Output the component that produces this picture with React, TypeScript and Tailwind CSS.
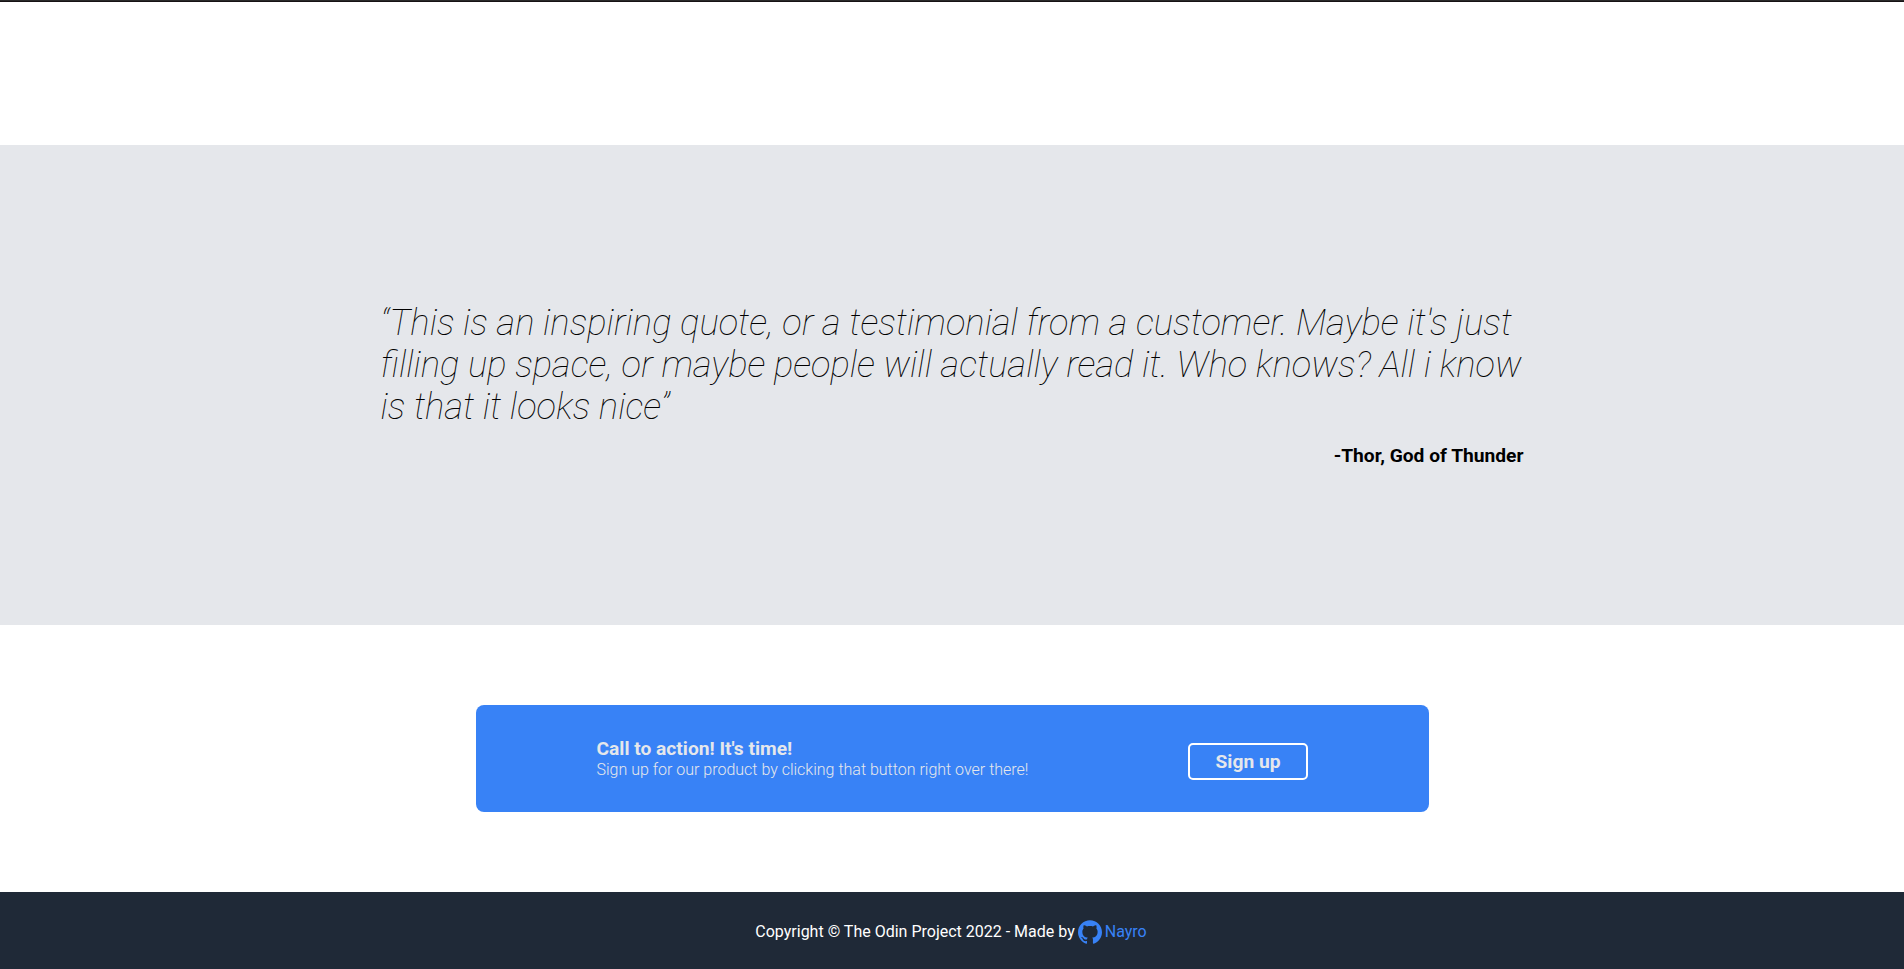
import React from "react";
import { SiGithub } from "react-icons/si";

export default function App() {
  return (
    <div className="flex h-[969px] flex-col overflow-hidden bg-white font-['Roboto',sans-serif] text-black">
      <div className="h-[145px] shrink-0">
        <div className="h-px bg-[#2a2a2a]" />
        <div className="h-px bg-[#161214]" />
      </div>
      <section className="flex h-[480px] shrink-0 flex-col items-center bg-[#e5e7eb] pt-[157px]">
        <div className="flex w-[1143px] flex-col">
          <p className="text-[36.38px] leading-[42px] font-thin italic">
            “This is an inspiring quote, or a testimonial from a customer. Maybe it's just filling up space, or maybe people will actually read it. Who knows? All i know is that it looks nice”
          </p>
          <p className="mt-[17px] text-right text-[19.2px] leading-[22px] font-bold">-Thor, God of Thunder</p>
        </div>
      </section>
      <section className="flex h-[267px] shrink-0 items-center justify-center">
        <div className="flex h-[107px] w-[953px] items-center justify-between rounded-lg bg-[#3882f6] px-[121px] text-[#e5e7eb]">
          <div>
            <h2 className="text-[19.2px] leading-[22px] font-bold">Call to action! It's time!</h2>
            <p className="text-base leading-[19px] font-light">Sign up for our product by clicking that button right over there!</p>
          </div>
          <button className="mt-1.5 h-[37px] w-[120px] rounded-[5px] border-2 border-white pl-px text-[19.2px] leading-[22px] font-bold">Sign up</button>
        </div>
      </section>
      <footer className="flex h-[77px] shrink-0 items-center justify-center bg-[#1f2937] pt-0.5 pr-0.5 text-base text-white">
        <span>Copyright © The Odin Project 2022 - Made by</span>
        <a className="ml-[3px] flex items-center gap-[3px] text-[#3882f6]">
          <SiGithub size={24} />
          Nayro
        </a>
      </footer>
    </div>
  );
}
